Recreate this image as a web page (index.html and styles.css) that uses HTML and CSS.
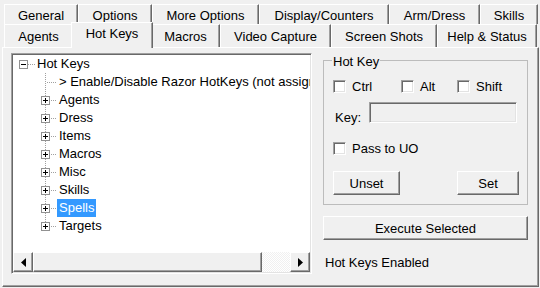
FILE: index.html
```html
<!DOCTYPE html>
<html lang="en">
  <head>
    <meta charset="UTF-8" />
    <title>Razor - Hot Keys</title>
    <link rel="stylesheet" href="styles.css">
  </head>

  <body>
    <div class="tabs">
      <div class="tab-row back">
        <div class="tab">General</div>
        <div class="tab">Options</div>
        <div class="tab">More Options</div>
        <div class="tab">Display/Counters</div>
        <div class="tab">Arm/Dress</div>
        <div class="tab">Skills</div>
      </div>
      <div class="tab-row front">
        <div class="tab">Agents</div>
        <div class="tab active">Hot Keys</div>
        <div class="tab">Macros</div>
        <div class="tab">Video Capture</div>
        <div class="tab">Screen Shots</div>
        <div class="tab">Help &amp; Status</div>
      </div>
    </div>

    <div class="page">
      <!-- hot key tree -->
      <div class="tree">
        <div class="tree-items">
          <div class="node root">
            <span class="expander"></span><span class="stub"></span><span class="label">Hot Keys</span>
          </div>
          <div class="children">
            <div class="node"><span class="joint"></span><span class="label">&gt; Enable/Disable Razor HotKeys (not assigned)</span></div>
            <div class="node"><span class="joint"><span class="expander plus"></span></span><span class="label">Agents</span></div>
            <div class="node"><span class="joint"><span class="expander plus"></span></span><span class="label">Dress</span></div>
            <div class="node"><span class="joint"><span class="expander plus"></span></span><span class="label">Items</span></div>
            <div class="node"><span class="joint"><span class="expander plus"></span></span><span class="label">Macros</span></div>
            <div class="node"><span class="joint"><span class="expander plus"></span></span><span class="label">Misc</span></div>
            <div class="node"><span class="joint"><span class="expander plus"></span></span><span class="label">Skills</span></div>
            <div class="node"><span class="joint"><span class="expander plus"></span></span><span class="label selected">Spells</span></div>
            <div class="node last"><span class="joint"><span class="expander plus"></span></span><span class="label">Targets</span></div>
          </div>
        </div>
        <div class="hscroll">
          <div class="sb-btn">
            <svg width="5" height="9" viewBox="0 0 5 9"><path d="M5 0V9L0 4.5z" fill="#000"/></svg>
          </div>
          <div class="sb-thumb"></div>
          <div class="sb-track"></div>
          <div class="sb-btn">
            <svg width="5" height="9" viewBox="0 0 5 9"><path d="M0 0V9L5 4.5z" fill="#000"/></svg>
          </div>
        </div>
      </div>

      <!-- key settings -->
      <div class="side">
        <fieldset class="group">
          <legend>Hot Key</legend>
          <div class="mods">
            <label class="check"><span class="box"></span>Ctrl</label>
            <label class="check"><span class="box"></span>Alt</label>
            <label class="check"><span class="box"></span>Shift</label>
          </div>
          <div class="key-row">
            <span class="caption">Key:</span>
            <span class="keybox"></span>
          </div>
          <label class="check pass"><span class="box"></span>Pass to UO</label>
          <div class="btn-row">
            <button class="btn unset">Unset</button>
            <button class="btn set">Set</button>
          </div>
        </fieldset>
        <button class="btn exec">Execute Selected</button>
        <div class="status">Hot Keys Enabled</div>
      </div>
    </div>
  </body>
</html>
```

FILE: styles.css
```css
* {
  box-sizing: border-box;
}

body {
  margin: 0;
  width: 540px;
  height: 288px;
  overflow: hidden;
  background-color: #f0f0f0;
  color: #000;
  font-family: "Liberation Sans", Arial, sans-serif;
  font-size: 13px;
  line-height: 15px;
  display: flex;
  flex-direction: column;
}

/* tab strip */
.tabs {
  margin: 4px 2px 0 4px;
}

.tab-row {
  display: flex;
}
.tab-row.back {
  height: 20px;
}
.tab-row.front {
  height: 23px;
}

.tab {
  flex: none;
  height: 100%;
  padding-top: 3px;
  background-color: #f0f0f0;
  border-top: 1px solid #fff;
  border-left: 1px solid #fff;
  border-right: 1px solid #696969;
  box-shadow: inset -1px 0 #a0a0a0;
  text-align: center;
  white-space: nowrap;
}
.front .tab {
  padding-top: 4px;
}
.front .tab.active {
  position: relative;
  z-index: 1;
  height: 26px;
  margin: -2px -2px 0;
  padding-top: 3px;
}

.back .tab:nth-child(1) { width: 74px; }
.back .tab:nth-child(2) { width: 74px; }
.back .tab:nth-child(3) { width: 107px; }
.back .tab:nth-child(4) { width: 130px; }
.back .tab:nth-child(5) { width: 91px; }
.back .tab:nth-child(6) { width: 58px; }

.front .tab:nth-child(1) { width: 69px; }
.front .tab:nth-child(2) { width: 82px; }
.front .tab:nth-child(3) { width: 69px; }
.front .tab:nth-child(4) { width: 111px; }
.front .tab:nth-child(5) { width: 106px; }
.front .tab:nth-child(6) { width: 100px; }

/* tab page */
.page {
  flex: 1;
  display: flex;
  gap: 11px;
  margin: 0 1px 1px 2px;
  padding: 5px 0 0 8px;
  border: 1px solid;
  border-color: #fff #696969 #696969 #fff;
  box-shadow: inset -1px -1px #a0a0a0;
}

/* tree view */
.tree {
  flex: none;
  width: 301px;
  height: 221px;
  padding: 1px;
  background-color: #fff;
  border: 1px solid;
  border-color: #a0a0a0 #fff #fff #a0a0a0;
  box-shadow: inset 1px 1px #696969, inset -1px -1px #e3e3e3;
  display: flex;
  flex-direction: column;
}

.tree-items {
  flex: 1;
  overflow: hidden;
  white-space: nowrap;
  line-height: 18px;
}

.node {
  display: flex;
  height: 18px;
}
.root .expander {
  margin: 5px 0 0 6px;
}
.children .node {
  padding-left: 32px;
}

.label {
  padding: 0 2px;
}
.label.selected {
  background-color: #3399ff;
  color: #fff;
}

.stub {
  width: 7px;
  height: 1px;
  margin-top: 9px;
  background: repeating-linear-gradient(to right, #a0a0a0 0 1px, transparent 1px 2px);
}

.joint {
  flex: none;
  position: relative;
  width: 12px;
}
.joint::before {
  content: "";
  position: absolute;
  left: 0;
  top: 0;
  bottom: 0;
  width: 1px;
  background: repeating-linear-gradient(to bottom, #a0a0a0 0 1px, transparent 1px 2px);
}
.last .joint::before {
  bottom: auto;
  height: 10px;
}
.joint::after {
  content: "";
  position: absolute;
  left: 1px;
  right: 0;
  top: 9px;
  height: 1px;
  background: repeating-linear-gradient(to right, transparent 0 1px, #a0a0a0 1px 2px);
}

.expander {
  flex: none;
  position: relative;
  width: 9px;
  height: 9px;
  background-color: #fff;
  border: 1px solid #919191;
}
.joint .expander {
  position: absolute;
  z-index: 1;
  left: -4px;
  top: 5px;
}
.expander::before {
  content: "";
  position: absolute;
  left: 1px;
  top: 3px;
  width: 5px;
  height: 1px;
  background-color: #000;
}
.expander.plus::after {
  content: "";
  position: absolute;
  left: 3px;
  top: 1px;
  width: 1px;
  height: 5px;
  background-color: #000;
}

/* horizontal scrollbar */
.hscroll {
  flex: none;
  display: flex;
  height: 20px;
}
.sb-btn,
.sb-thumb {
  background-color: #f0f0f0;
  border: 1px solid;
  border-color: #fff #696969 #696969 #fff;
  box-shadow: inset -1px -1px #a0a0a0;
}
.sb-btn {
  flex: none;
  width: 20px;
  display: flex;
  align-items: center;
  justify-content: center;
}
.sb-thumb {
  flex: 1;
}
.sb-track {
  flex: none;
  width: 28px;
  background: repeating-conic-gradient(#fff 0 25%, #f0f0f0 0 50%) 0 0 / 2px 2px;
}

/* right column */
.side {
  flex: none;
  width: 205px;
  margin-top: -1px;
  display: flex;
  flex-direction: column;
}

.group {
  margin: 0;
  min-width: 0;
  padding: 0 8px 9px 9px;
  border: 1px solid #bcbcbc;
}
.group legend {
  margin-left: -1px;
  padding: 3px 1px 0;
  line-height: 13px;
}

.mods {
  display: flex;
  height: 13px;
  margin-top: 12px;
}
.mods .check:nth-child(1) { width: 68px; }
.mods .check:nth-child(2) { width: 56px; }

.check {
  display: flex;
  align-items: center;
  gap: 6px;
  height: 13px;
  line-height: 13px;
}
.check.pass {
  margin-top: 19px;
}

.box,
.keybox {
  flex: none;
  border: 1px solid;
  border-color: #a0a0a0 #fff #fff #a0a0a0;
  box-shadow: inset 1px 1px #696969, inset -1px -1px #e3e3e3;
}
.box {
  width: 13px;
  height: 13px;
  background-color: #fff;
}

.key-row {
  display: flex;
  height: 21px;
  margin-top: 9px;
}
.key-row .caption {
  width: 34px;
  margin: 8px 0 0 2px;
}
.keybox {
  width: 148px;
  height: 21px;
  background-color: #f0f0f0;
}

.btn-row {
  display: flex;
  justify-content: space-between;
  margin-top: 16px;
}

.btn {
  height: 24px;
  padding: 0;
  font: inherit;
  color: #000;
  background-color: #f0f0f0;
  border: 1px solid;
  border-color: #fff #696969 #696969 #fff;
  box-shadow: inset -1px -1px #a0a0a0;
}
.btn.unset {
  width: 67px;
}
.btn.set {
  width: 62px;
}
.btn.exec {
  width: 205px;
  margin-top: 11px;
}

.status {
  margin: 15px 0 0 2px;
}
```
